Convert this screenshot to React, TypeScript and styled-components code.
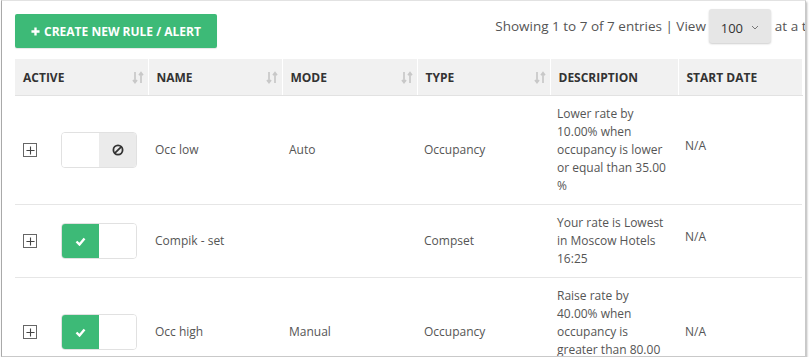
import styled, { createGlobalStyle } from "styled-components";

const GlobalStyle = createGlobalStyle`
  html, body { margin: 0; padding: 0; background: #fff; }
  body { font-family: "Open Sans", "Liberation Sans", sans-serif; }
`;

const Frame = styled.div`
  margin-left: 1px;
  width: 803px;
  height: 355px;
  border: 1px solid #c9c9c9;
  border-left-color: #a9a9a9;
  border-top-color: #e2e2e2;
  box-shadow: 1px 2px 2px rgba(0, 0, 0, 0.3);
  overflow: hidden;
  background: #fff;
`;

const Page = styled.div`
  padding: 8px 0 0 13px;
  width: 840px;
`;

const Toolbar = styled.div`
  display: flex;
  align-items: flex-start;
  width: 815px;
  white-space: nowrap;
`;

const CreateButton = styled.button`
  margin-top: 5px;
  height: 34px;
  width: 202px;
  padding: 0;
  border: none;
  border-radius: 2px;
  background: #3dba77;
  color: #fff;
  font-family: inherit;
  font-size: 12px;
  font-weight: 700;
  display: flex;
  align-items: center;
  justify-content: center;
  gap: 4px;
  box-shadow: 0 1px 1px rgba(0, 0, 0, 0.1);
`;

const Info = styled.div`
  margin-left: auto;
  display: flex;
  align-items: center;
  gap: 3px;
  font-size: 13.5px;
  color: #555;
  height: 34px;
`;

const Select = styled.div`
  width: 62px;
  height: 34px;
  box-sizing: border-box;
  margin: 0 1px 0 0;
  background: #e6e6e6;
  border-radius: 3px;
  box-shadow: 0 1px 2px rgba(0, 0, 0, 0.2);
  display: flex;
  align-items: center;
  justify-content: center;
  gap: 8px;
  font-size: 13px;
  color: #333;
  padding-top: 3px;
`;

const Table = styled.table`
  margin-top: 11px;
  width: 787px;
  table-layout: fixed;
  border-collapse: collapse;
`;

const Th = styled.th`
  height: 36px;
  padding: 0 4px 0 8px;
  background: #f1f1f1;
  border-right: 1px solid #fff;
  border-bottom: 1px solid #e2e2e2;
  text-align: left;
  font-size: 12px;
  font-weight: 700;
  color: #333;
`;

const HeadInner = styled.div`
  display: flex;
  align-items: center;
  justify-content: space-between;
`;

const Td = styled.td<{ $lift?: boolean }>`
  padding: 9px 7px ${({ $lift }) => ($lift ? "18px" : "9px")} 7px;
  border-bottom: 1px solid #e6e6e6;
  vertical-align: middle;
  font-size: 12px;
  line-height: 18px;
  color: #555;
`;

const ActiveCell = styled.div`
  display: flex;
  align-items: center;
  gap: 24px;
  padding-left: 1px;
`;

const ExpandBox = styled.span`
  width: 12px;
  height: 12px;
  border: 1px solid #666;
  display: flex;
  align-items: center;
  justify-content: center;
`;

const Toggle = styled.div`
  width: 76px;
  height: 36px;
  box-sizing: border-box;
  border: 1px solid #e1e1e1;
  border-radius: 4px;
  overflow: hidden;
  display: flex;
`;

const Half = styled.div<{ $tone: "green" | "grey" | "white" }>`
  flex: 1;
  display: flex;
  align-items: center;
  justify-content: center;
  background: ${({ $tone }) =>
    $tone === "green" ? "#3dba77" : $tone === "grey" ? "#ebebeb" : "#fff"};
`;

const SortIcon = () => (
  <svg width="12" height="13" viewBox="0 0 12 13" fill="none" stroke="#c8c8c8" strokeWidth="1.7">
    <path d="M3 1v10M1 9l2 2.6L5 9" />
    <path d="M9 12V2M7 4.2l2-2.6L11 4.2" />
  </svg>
);

const Check = () => (
  <svg width="11" height="9" viewBox="0 0 11 9" fill="none" stroke="#fff" strokeWidth="2.4">
    <path d="M1.5 4.5l3 3 5-6" />
  </svg>
);

const Ban = () => (
  <svg width="12" height="12" viewBox="0 0 12 12" fill="none" stroke="#333" strokeWidth="1.8">
    <circle cx="6" cy="6" r="4.6" />
    <path d="M2.8 9.2l6.4-6.4" />
  </svg>
);

const Plus = ({ size, color, w }: { size: number; color: string; w: number }) => (
  <svg width={size} height={size} viewBox="0 0 10 10" stroke={color} strokeWidth={w}>
    <path d="M5 0.5v9M0.5 5h9" />
  </svg>
);

const Chevron = () => (
  <svg width="8" height="5" viewBox="0 0 8 5" fill="none" stroke="#777" strokeWidth="1">
    <path d="M1 1l3 3 3-3" />
  </svg>
);

interface Rule {
  active: boolean;
  name: string;
  mode: string;
  type: string;
  description: string;
  lift: boolean;
}

const rules: Rule[] = [
  {
    active: false,
    name: "Occ low",
    mode: "Auto",
    type: "Occupancy",
    description: "Lower rate by 10.00% when occupancy is lower or equal than 35.00 %",
    lift: true,
  },
  {
    active: true,
    name: "Compik - set",
    mode: "",
    type: "Compset",
    description: "Your rate is Lowest in Moscow Hotels 16:25",
    lift: true,
  },
  {
    active: true,
    name: "Occ high",
    mode: "Manual",
    type: "Occupancy",
    description: "Raise rate by 40.00% when occupancy is greater than 80.00 %",
    lift: false,
  },
];

const columns = [
  { label: "ACTIVE", width: 133, sort: true },
  { label: "NAME", width: 134, sort: true },
  { label: "MODE", width: 135, sort: true },
  { label: "TYPE", width: 133, sort: true },
  { label: "DESCRIPTION", width: 128, sort: false },
  { label: "START DATE", width: 124, sort: false },
];

export default function App() {
  return (
    <>
      <GlobalStyle />
      <Frame>
        <Page>
          <Toolbar>
            <CreateButton>
              <Plus size={9} color="#fff" w={2.6} />
              CREATE NEW RULE / ALERT
            </CreateButton>
            <Info>
              <span>Showing 1 to 7 of 7 entries | View</span>
              <Select>
                100 <Chevron />
              </Select>
              <span>at a time</span>
            </Info>
          </Toolbar>
          <Table>
            <colgroup>
              {columns.map((c) => (
                <col key={c.label} style={{ width: c.width }} />
              ))}
            </colgroup>
            <thead>
              <tr>
                {columns.map((c) => (
                  <Th key={c.label}>
                    <HeadInner>
                      {c.label}
                      {c.sort && <SortIcon />}
                    </HeadInner>
                  </Th>
                ))}
              </tr>
            </thead>
            <tbody>
              {rules.map((r) => (
                <tr key={r.name}>
                  <Td>
                    <ActiveCell>
                      <ExpandBox>
                        <Plus size={9} color="#444" w={1.2} />
                      </ExpandBox>
                      <Toggle>
                        {r.active ? (
                          <>
                            <Half $tone="green"><Check /></Half>
                            <Half $tone="white" />
                          </>
                        ) : (
                          <>
                            <Half $tone="white" />
                            <Half $tone="grey"><Ban /></Half>
                          </>
                        )}
                      </Toggle>
                    </ActiveCell>
                  </Td>
                  <Td>{r.name}</Td>
                  <Td>{r.mode}</Td>
                  <Td>{r.type}</Td>
                  <Td>{r.description}</Td>
                  <Td $lift={r.lift}>N/A</Td>
                </tr>
              ))}
            </tbody>
          </Table>
        </Page>
      </Frame>
    </>
  );
}
